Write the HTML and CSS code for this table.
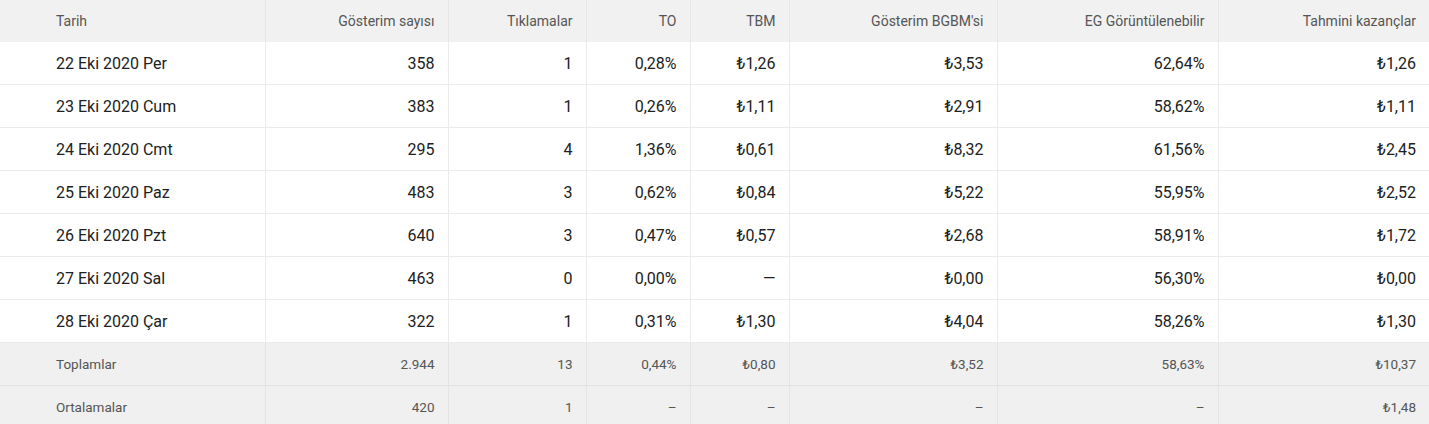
FILE: index.html
```html
<!DOCTYPE html>
<html lang="tr">
<head>
<meta charset="utf-8">
<title>Rapor</title>
<link rel="stylesheet" href="styles.css">
</head>
<body>
<table class="report">
  <colgroup>
    <col class="c-date"><col class="c-imp"><col class="c-clk"><col class="c-ctr"><col class="c-cpc"><col class="c-rpm"><col class="c-view"><col class="c-earn">
  </colgroup>
  <thead>
    <tr>
      <th class="first">Tarih</th>
      <th>Gösterim sayısı</th>
      <th>Tıklamalar</th>
      <th>TO</th>
      <th>TBM</th>
      <th>Gösterim BGBM'si</th>
      <th>EG Görüntülenebilir</th>
      <th>Tahmini kazançlar</th>
    </tr>
  </thead>
  <tbody>
    <tr><td class="first">22 Eki 2020 Per</td><td>358</td><td>1</td><td>0,28%</td><td>₺1,26</td><td>₺3,53</td><td>62,64%</td><td>₺1,26</td></tr>
    <tr><td class="first">23 Eki 2020 Cum</td><td>383</td><td>1</td><td>0,26%</td><td>₺1,11</td><td>₺2,91</td><td>58,62%</td><td>₺1,11</td></tr>
    <tr><td class="first">24 Eki 2020 Cmt</td><td>295</td><td>4</td><td>1,36%</td><td>₺0,61</td><td>₺8,32</td><td>61,56%</td><td>₺2,45</td></tr>
    <tr><td class="first">25 Eki 2020 Paz</td><td>483</td><td>3</td><td>0,62%</td><td>₺0,84</td><td>₺5,22</td><td>55,95%</td><td>₺2,52</td></tr>
    <tr><td class="first">26 Eki 2020 Pzt</td><td>640</td><td>3</td><td>0,47%</td><td>₺0,57</td><td>₺2,68</td><td>58,91%</td><td>₺1,72</td></tr>
    <tr><td class="first">27 Eki 2020 Sal</td><td>463</td><td>0</td><td>0,00%</td><td>—</td><td>₺0,00</td><td>56,30%</td><td>₺0,00</td></tr>
    <tr><td class="first">28 Eki 2020 Çar</td><td>322</td><td>1</td><td>0,31%</td><td>₺1,30</td><td>₺4,04</td><td>58,26%</td><td>₺1,30</td></tr>
  </tbody>
  <tfoot>
    <tr><td class="first">Toplamlar</td><td>2.944</td><td>13</td><td>0,44%</td><td>₺0,80</td><td>₺3,52</td><td>58,63%</td><td>₺10,37</td></tr>
    <tr><td class="first">Ortalamalar</td><td>420</td><td>1</td><td>–</td><td>–</td><td>–</td><td>–</td><td>₺1,48</td></tr>
  </tfoot>
</table>
</body>
</html>
```
FILE: styles.css
```css
html, body {
  margin: 0;
  padding: 0;
  background: #ffffff;
}
body {
  font-family: Roboto, "Liberation Sans", Arial, sans-serif;
  overflow: hidden;
}
.report {
  width: 1429px;
  border-collapse: collapse;
  table-layout: fixed;
}
.c-date { width: 265px; }
.c-imp { width: 183px; }
.c-clk { width: 138px; }
.c-ctr { width: 104px; }
.c-cpc { width: 99px; }
.c-rpm { width: 208px; }
.c-view { width: 221px; }
.c-earn { width: 211px; }

.report th,
.report td {
  text-align: right;
  padding: 0 13px 0 0;
  white-space: nowrap;
  border-left: 1px solid #ebebeb;
}
.report th:first-child,
.report td:first-child {
  border-left: none;
}
.report .first {
  text-align: left;
  padding-left: 56px;
}
.report thead th {
  height: 42px;
  background: #f1f1f1;
  color: #555555;
  font-size: 14px;
  font-weight: 400;
  border-left-color: #e6e6e6;
}
.report tbody td {
  height: 42px;
  font-size: 16px;
  color: #212121;
  border-bottom: 1px solid #ebebeb;
}
.report tfoot td {
  height: 42px;
  background: #f0f0f0;
  color: #555555;
  font-size: 13.5px;
  border-bottom: 1px solid #e2e2e2;
  border-left-color: #e4e4e4;
}
```
